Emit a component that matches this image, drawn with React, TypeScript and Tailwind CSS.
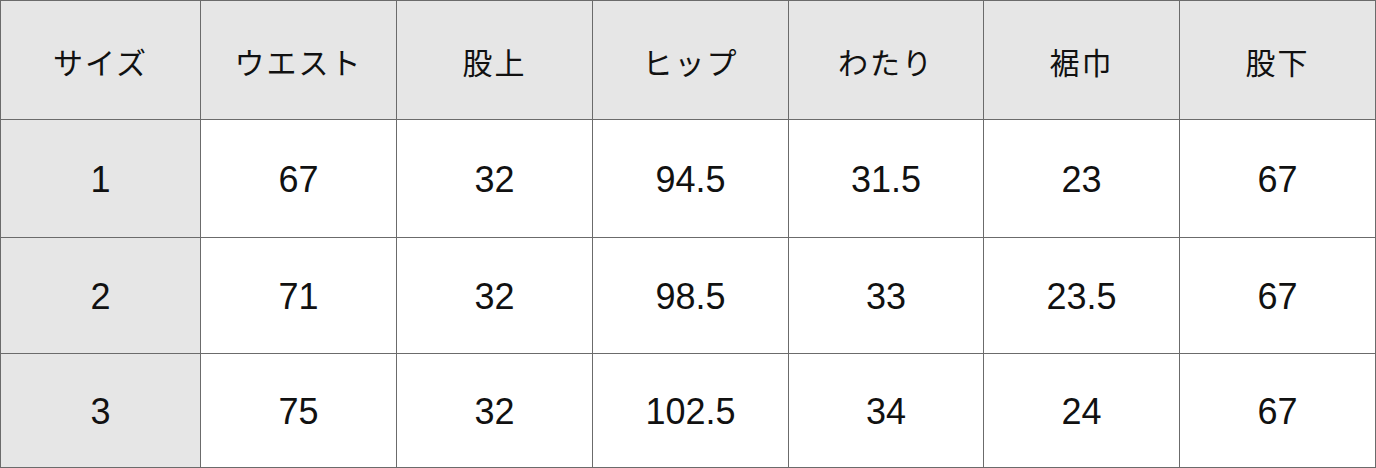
const headers = ["サイズ", "ウエスト", "股上", "ヒップ", "わたり", "裾巾", "股下"];

const rows = [
  ["1", "67", "32", "94.5", "31.5", "23", "67"],
  ["2", "71", "32", "98.5", "33", "23.5", "67"],
  ["3", "75", "32", "102.5", "34", "24", "67"],
];

const cell =
  "flex items-center justify-center border-r border-b border-[#6b6b6b] text-[#111111]";

export default function App() {
  return (
    <div className="w-[1376px] h-[468px] bg-white">
      <div className="grid grid-cols-[200px_196px_196px_196px_195px_196px_196px] grid-rows-[119px_118px_116px_114px] border-t border-l border-[#6b6b6b]">
        {headers.map((h) => (
          <div
            key={h}
            className={`${cell} bg-[#e6e6e6] pt-[2px] text-[30px] tracking-[2px] font-['Noto_Sans_CJK_JP',sans-serif]`}
          >
            {h}
          </div>
        ))}
        {rows.map((r) =>
          r.map((v, i) => (
            <div
              key={r[0] + "-" + i}
              className={`${cell} pt-[2px] text-[36px] font-['Liberation_Sans',Arial,sans-serif] ${
                i === 0 ? "bg-[#e6e6e6]" : "bg-white"
              }`}
            >
              {v}
            </div>
          ))
        )}
      </div>
    </div>
  );
}
